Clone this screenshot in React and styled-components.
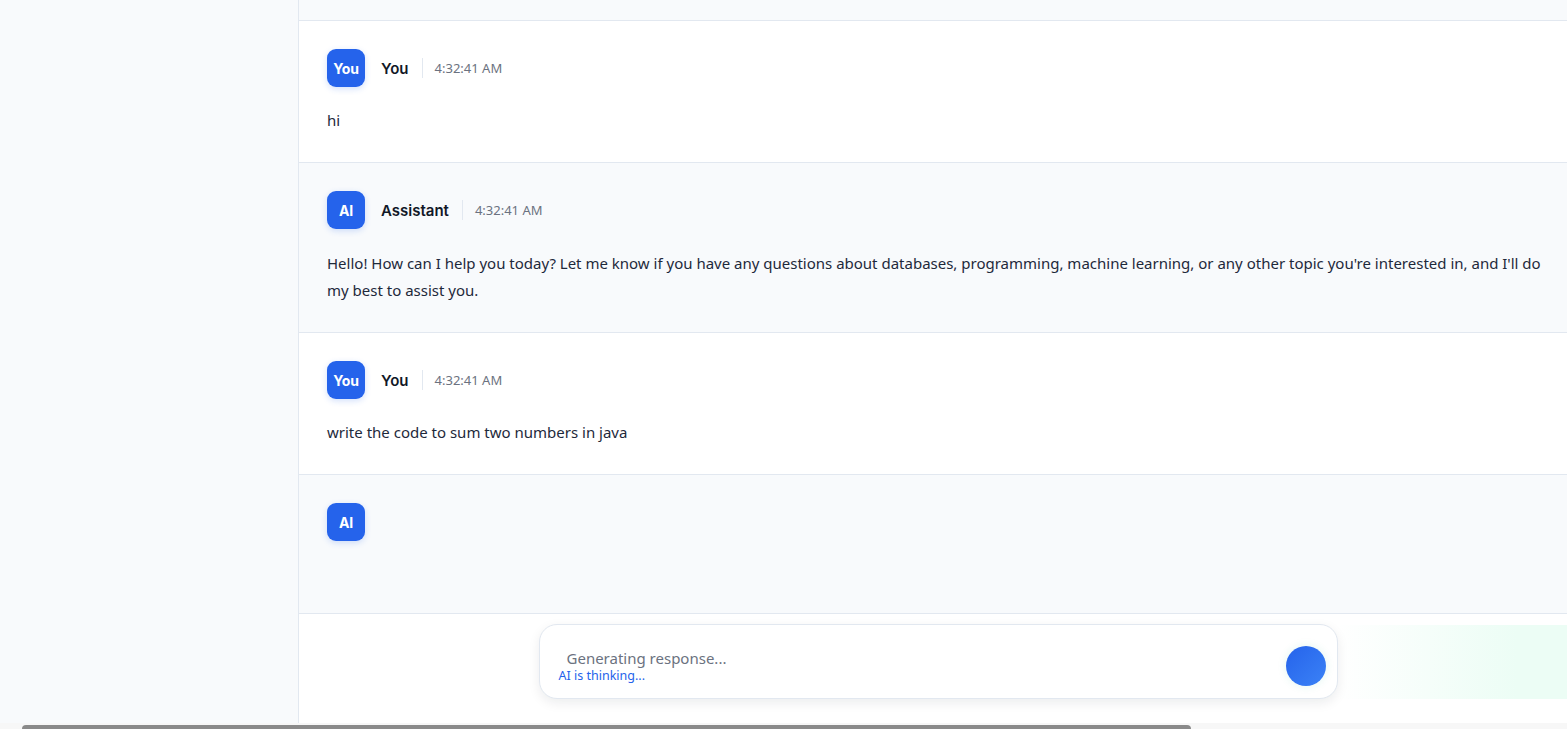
import React from "react";
import styled, { createGlobalStyle } from "styled-components";

const GlobalStyle = createGlobalStyle`
  html, body {
    margin: 0;
    padding: 0;
    overflow: hidden;
    background: #ffffff;
  }
  body {
    font-family: "Noto Sans", "Open Sans", "Liberation Sans", sans-serif;
    color: #1e293b;
  }
  * {
    box-sizing: border-box;
  }
`;

const messages = [
  { id: 1, role: "user", time: "4:32:41 AM", text: "hi" },
  {
    id: 2,
    role: "ai",
    time: "4:32:41 AM",
    text:
      "Hello! How can I help you today? Let me know if you have any questions about databases, programming, machine learning, or any other topic you're interested in, and I'll do my best to assist you.",
  },
  {
    id: 3,
    role: "user",
    time: "4:32:41 AM",
    text: "write the code to sum two numbers in java",
  },
  { id: 4, role: "ai", pending: true },
];

const App = () => {
  return (
    <Viewport>
      <GlobalStyle />
      <Layout>
        <Sidebar />
        <Main>
          <MessageList>
            {/* tail of an earlier message, scrolled out of view */}
            <EarlierMessage />
            {messages.map((msg) => (
              <Message key={msg.id} $alt={msg.role === "ai"}>
                <MessageHeader>
                  <Avatar>{msg.role === "ai" ? "AI" : "You"}</Avatar>
                  {!msg.pending && (
                    <>
                      <Name>{msg.role === "ai" ? "Assistant" : "You"}</Name>
                      <Divider />
                      <Time>{msg.time}</Time>
                    </>
                  )}
                </MessageHeader>
                {msg.pending ? (
                  <Typing />
                ) : (
                  <Body $alt={msg.role === "ai"}>{msg.text}</Body>
                )}
              </Message>
            ))}
          </MessageList>
          <InputArea>
            <InputBox>
              <InputColumn>
                <TextInput placeholder="Generating response..." disabled rows={1} />
                <Status>AI is thinking...</Status>
              </InputColumn>
              <SendButton type="button" aria-label="Send" />
              <Glow />
            </InputBox>
          </InputArea>
        </Main>
      </Layout>
      <ScrollTrack>
        <ScrollThumb />
      </ScrollTrack>
    </Viewport>
  );
};

const Viewport = styled.div`
  width: 100vw;
  height: 729px;
  overflow: hidden;
  display: flex;
  flex-direction: column;
`;

const Layout = styled.div`
  display: flex;
  height: 723px;
  flex-shrink: 0;
`;

/* page scroll bar, only its top edge is in view */
const ScrollTrack = styled.div`
  flex: 1;
  background: #f7f7f7;
  padding: 2px 14px 0 22px;
`;

const ScrollThumb = styled.div`
  width: 1169px;
  height: 10px;
  background: #8a8a8a;
  border-radius: 4px;
`;

const Sidebar = styled.aside`
  width: 299px;
  flex-shrink: 0;
  background: #f8fafc;
  border-right: 1px solid #e2e8f0;
`;

const Main = styled.main`
  flex: 1;
  min-width: 0;
  display: flex;
  flex-direction: column;
  background: #ffffff;
`;

const MessageList = styled.div`
  flex: 1;
  min-height: 0;
  overflow: hidden;
  display: flex;
  flex-direction: column;
`;

const EarlierMessage = styled.div`
  flex: 1;
  background: #f8fafc;
  border-bottom: 1px solid #e2e8f0;
`;

const Message = styled.div`
  flex-shrink: 0;
  padding: 28px 20px 28px 28px;
  background: ${(p) => (p.$alt ? "#f8fafc" : "#ffffff")};
  border-bottom: 1px solid #e2e8f0;
`;

const MessageHeader = styled.div`
  display: flex;
  align-items: center;
  height: 38px;
`;

const Avatar = styled.div`
  width: 38px;
  height: 38px;
  border-radius: 9px;
  background: #2563eb;
  color: #ffffff;
  display: flex;
  align-items: center;
  justify-content: center;
  font-family: "Inter", "Liberation Sans", sans-serif;
  font-weight: 700;
  font-size: 14px;
  letter-spacing: -0.2px;
  box-shadow: 0 2px 6px rgba(37, 99, 235, 0.2);
  margin-right: 16px;
`;

const Name = styled.span`
  font-family: "Inter", "Liberation Sans", sans-serif;
  font-weight: 600;
  font-size: 15px;
  color: #111827;
`;

const Divider = styled.span`
  width: 1px;
  height: 20px;
  background: #e2e8f0;
  margin: 0 12px 0 13px;
`;

const Time = styled.span`
  font-size: 13px;
  color: #6b7280;
`;

const Body = styled.div`
  margin-top: ${(p) => (p.$alt ? "21px" : "20px")};
  font-size: 15px;
  line-height: 27px;
  color: #1e293b;
`;

const Typing = styled.div`
  margin-top: 21px;
  height: 23px;
`;

const InputArea = styled.div`
  flex-shrink: 0;
  height: 109px;
  display: flex;
  justify-content: center;
  padding: 10px 0 0 10px;
  background: #ffffff;
`;

const InputBox = styled.div`
  position: relative;
  width: 799px;
  height: 75px;
  display: flex;
  align-items: flex-start;
  padding: 12px 11px 12px 19px;
  border: 1px solid #e2e8f0;
  border-radius: 18px;
  background: #ffffff;
  box-shadow: 0 4px 12px rgba(15, 23, 42, 0.08);
`;

const InputColumn = styled.div`
  flex: 1;
  display: flex;
  flex-direction: column;
`;

const TextInput = styled.textarea`
  height: 31px;
  padding: 11px 8px 0 8px;
  border: none;
  outline: none;
  resize: none;
  background: transparent;
  font-family: "Noto Sans", "Open Sans", sans-serif;
  font-size: 15px;
  line-height: 20px;
  overflow: hidden;
  &::placeholder {
    color: #6b7280;
  }
`;

const Status = styled.div`
  font-size: 12.5px;
  line-height: 16px;
  color: #2563eb;
`;

const SendButton = styled.button`
  width: 40px;
  height: 40px;
  margin-top: 9px;
  border: none;
  border-radius: 50%;
  background: linear-gradient(135deg, #2563eb, #3b82f6);
  box-shadow: 0 0 10px rgba(16, 185, 129, 0.12);
  cursor: pointer;
`;

const Glow = styled.div`
  position: absolute;
  left: 100%;
  top: 0;
  width: 720px;
  height: 74px;
  background: linear-gradient(
    90deg,
    rgba(236, 253, 245, 0) 0,
    #ecfdf5 180px
  );
`;

export default App;
